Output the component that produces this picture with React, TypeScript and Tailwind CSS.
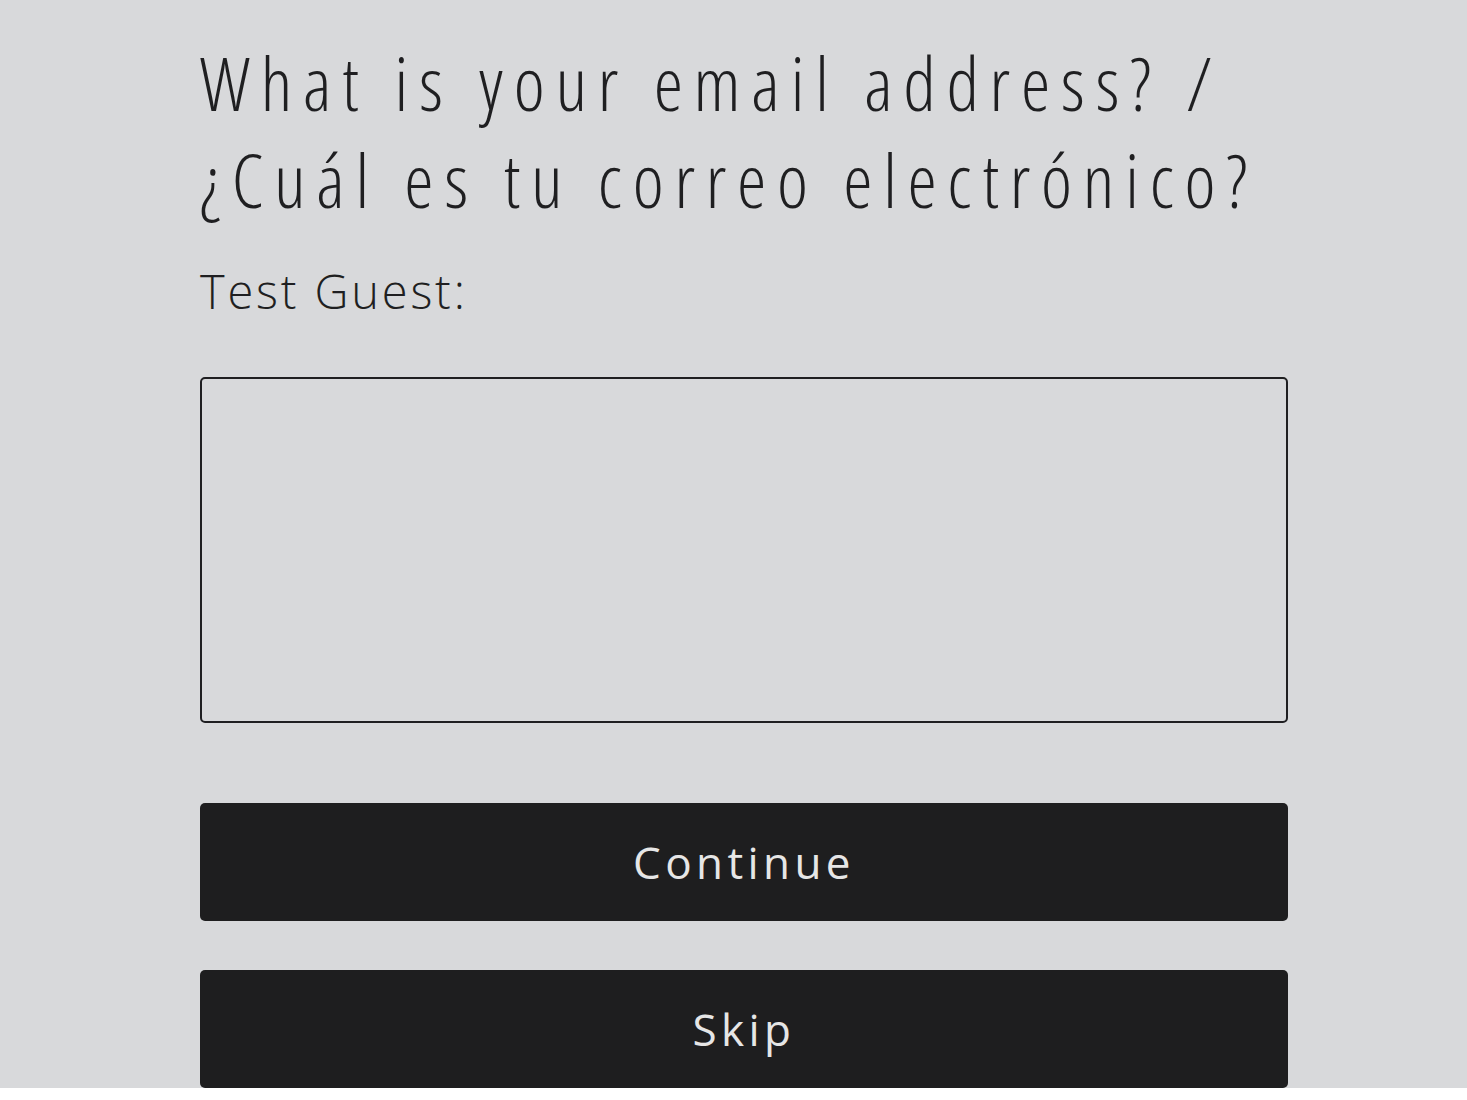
import React from 'react';

export default function App() {
  return (
    <div className="w-full bg-white">
      <div className="bg-[#d8d9db] pt-[34px]">
        <div className="ml-[200px] w-[1088px] flex flex-col">
          <h1
            className="text-[#1f1f21] text-[74px] leading-[97px] font-light tracking-[0.145em] whitespace-nowrap"
            style={{ fontFamily: '"Open Sans", "Noto Sans", sans-serif', fontStretch: '75%' }}
          >
            What is your email address? /<br />¿Cuál es tu correo electrónico?
          </h1>
          <label
            className="mt-[37px] text-[#1f1f21] text-[47px] leading-[52px] font-light tracking-[0.06em]"
            style={{ fontFamily: '"Open Sans", sans-serif' }}
          >
            Test Guest:
          </label>
          <textarea className="mt-[60px] h-[346px] w-full resize-none rounded-[5px] border-2 border-[#1f1f21] bg-transparent outline-none" />
          <button
            className="mt-[80px] h-[118px] w-full rounded-[5px] bg-[#1e1e1f] text-[#e6e6e6] text-[44px] font-medium tracking-[0.1em]"
            style={{ fontFamily: '"Open Sans", sans-serif' }}
          >
            Continue
          </button>
          <button
            className="mt-[49px] h-[118px] w-full rounded-[5px] bg-[#1e1e1f] text-[#e6e6e6] text-[44px] font-medium tracking-[0.1em]"
            style={{ fontFamily: '"Open Sans", sans-serif' }}
          >
            Skip
          </button>
        </div>
      </div>
      <div className="h-[20px] bg-white" />
    </div>
  );
}
